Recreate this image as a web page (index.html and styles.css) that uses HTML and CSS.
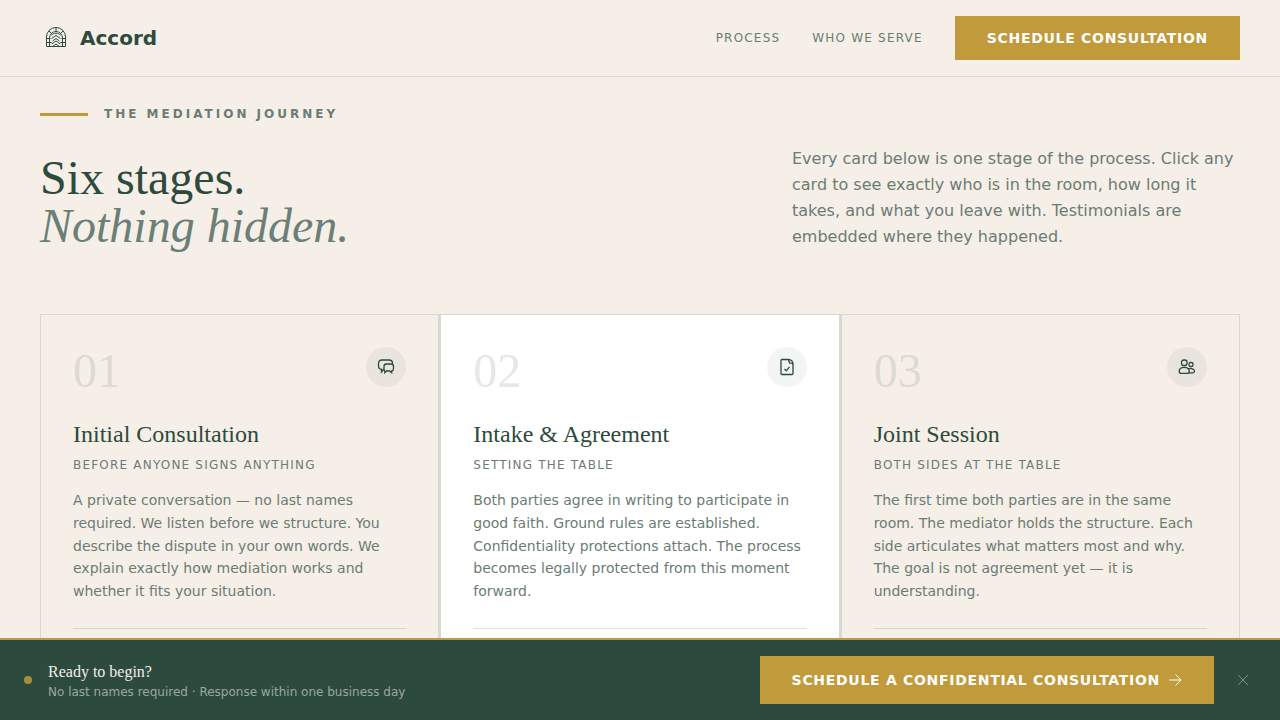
FILE: index.html
```html
<!DOCTYPE html>
<html lang="en">
<head>
    <meta charset="UTF-8">
    <meta name="viewport" content="width=device-width, initial-scale=1.0">
    <title>Accord</title>
    <link rel="stylesheet" href="styles.css">
</head>
<body>
    <header class="site-header">
        <a class="brand" href="#">
            <svg class="brand-mark" viewBox="0 0 32 32" fill="none" stroke="currentColor">
                <path d="M6.500 24.500V15a9.500 9.500 0 0 1 19 0v9.500z"/>
                <path d="M9.500 24.500V16a6.500 6.500 0 0 1 13 0v8.500M6.500 16.500h4M21.500 16.500h4M6.500 20.500h5M20.500 20.500h5M16 5.500v4M9 9l3 3M23 9l-3 3"/>
                <path d="M11.500 13.500c2-3 7-3 9 0M11.500 16.500l4.500-3 4.500 3M12.500 19l3.500-2.500 3.500 2.500M11.500 22l4.500-3 4.500 3M12.500 24.500l3.500-2.500 3.500 2.500"/>
            </svg>
            <span>Accord</span>
        </a>
        <nav class="nav">
            <a class="nav-link" href="#process">Process</a>
            <a class="nav-link" href="#serve">Who We Serve</a>
            <a class="btn" href="#schedule">Schedule Consultation</a>
        </nav>
    </header>

    <main class="journey" id="process">
        <div class="eyebrow">The Mediation Journey</div>
        <div class="intro">
            <h1>Six stages.<br><em>Nothing hidden.</em></h1>
            <p>Every card below is one stage of the process. Click any card to see exactly who is in the room, how long it takes, and what you leave with. Testimonials are embedded where they happened.</p>
        </div>

        <div class="stages">
            <article class="card">
                <div class="card-top">
                    <span class="number">01</span>
                    <span class="badge">
                        <svg viewBox="0 0 18 18" fill="none" stroke="currentColor">
                            <path d="M7 11.500H6.500L4.500 14v-2.600C2.300 11.100 1.500 10 1.500 8V5.500c0-2.400 1-3.500 3.500-3.500h7c2.500 0 3.500 1 3.500 3.500V6"/>
                            <path d="M9.500 6h4.500c1.800 0 2.500.7 2.500 2.500v2c0 1.600-.5 2.300-1.800 2.500v1.700L12.700 13H9.500l-1.700 1.700V13c-.6-.4-.8-1.200-.8-2.500v-2C7 6.700 7.700 6 9.500 6z"/>
                        </svg>
                    </span>
                </div>
                <h2>Initial Consultation</h2>
                <p class="subtitle">Before anyone signs anything</p>
                <p class="text">A private conversation — no last names required. We listen before we structure. You describe the dispute in your own words. We explain exactly how mediation works and whether it fits your situation.</p>
                <hr>
            </article>
            <article class="card card-active">
                <div class="card-top">
                    <span class="number">02</span>
                    <span class="badge">
                        <svg viewBox="0 0 18 18" fill="none" stroke="currentColor" stroke-linejoin="round">
                            <path d="M4 1.500h6.500c2.500 0 4.500 2 4.500 4.500v9.500c0 .6-.4 1-1 1H4c-.6 0-1-.4-1-1v-13c0-.6.400-1 1-1z"/>
                            <path d="M9.800 1.500c1 0 1.200.6 1.200 1.500 0 1.800.5 2.200 2 2.200 1.300 0 2 .3 2 1.300M6.500 11l1.800 1.800 3.200-4"/>
                        </svg>
                    </span>
                </div>
                <h2>Intake &amp; Agreement</h2>
                <p class="subtitle">Setting the table</p>
                <p class="text">Both parties agree in writing to participate in good faith. Ground rules are established. Confidentiality protections attach. The process becomes legally protected from this moment forward.</p>
                <hr>
            </article>
            <article class="card">
                <div class="card-top">
                    <span class="number">03</span>
                    <span class="badge">
                        <svg viewBox="0 0 18 18" fill="none" stroke="currentColor">
                            <rect x="3.500" y="2" width="5.500" height="5.500" rx="2.200"/>
                            <rect x="11" y="4.500" width="4" height="4" rx="1.600"/>
                            <path d="M1.200 13.400c0-2.600 2.200-4 5-4s5 1.400 5 4c0 1.200-.9 1.900-2.200 1.900H3.400c-1.300 0-2.200-.7-2.200-1.900zM10.300 10.900c3-1.100 6.200.1 6.200 2.400 0 1-.8 1.500-1.800 1.500H11"/>
                        </svg>
                    </span>
                </div>
                <h2>Joint Session</h2>
                <p class="subtitle">Both sides at the table</p>
                <p class="text">The first time both parties are in the same room. The mediator holds the structure. Each side articulates what matters most and why. The goal is not agreement yet — it is understanding.</p>
                <hr>
            </article>
        </div>
    </main>

    <aside class="cta-bar">
        <span class="dot"></span>
        <div class="cta-copy">
            <p class="cta-title">Ready to begin?</p>
            <p class="cta-note">No last names required · Response within one business day</p>
        </div>
        <a class="btn btn-large" href="#schedule">
            Schedule a Confidential Consultation
            <svg viewBox="0 0 14 14" fill="none" stroke="currentColor">
                <path d="M1 7h12M7.500 1.500 13 7l-5.500 5.500"/>
            </svg>
        </a>
        <button class="close" type="button" aria-label="Dismiss">
            <svg viewBox="0 0 14 14" fill="none" stroke="currentColor">
                <path d="M2 2l10 10M12 2 2 12"/>
            </svg>
        </button>
    </aside>
</body>
</html>
```
FILE: styles.css
```css
* {
    box-sizing: border-box;
}
body {
    margin: 0;
    padding-bottom: 82px;
    background: #f5efe7;
    color: #6b7c74;
    font-family: "DejaVu Sans", sans-serif;
}
h1, h2, p {
    margin: 0;
    font-weight: 400;
}
a {
    text-decoration: none;
}
svg {
    display: block;
}
.site-header {
    display: flex;
    align-items: center;
    justify-content: space-between;
    padding: 16px 40px;
    border-bottom: 1px solid #e0dad3;
}
.brand {
    display: flex;
    align-items: center;
    gap: 8px;
    color: #2d4a3e;
    font-size: 20px;
    font-weight: 700;
}
.brand-mark {
    width: 32px;
    height: 32px;
}
.nav {
    display: flex;
    align-items: center;
    gap: 32px;
}
.nav-link {
    color: #6b7c74;
    font-size: 12px;
    letter-spacing: 0.1em;
    text-transform: uppercase;
}
.btn {
    display: flex;
    align-items: center;
    gap: 8px;
    height: 44px;
    padding: 0 32px;
    background: #c19a3b;
    color: #fff;
    font-size: 14px;
    font-weight: 700;
    letter-spacing: 0.05em;
    text-transform: uppercase;
    white-space: nowrap;
}
.btn svg {
    width: 14px;
    height: 14px;
}
.btn-large {
    height: 48px;
}
.journey {
    padding: 28px 40px;
}
.eyebrow {
    display: flex;
    align-items: center;
    gap: 16px;
    font-size: 12px;
    line-height: 18px;
    font-weight: 700;
    letter-spacing: 3px;
    text-transform: uppercase;
}
.eyebrow::before {
    content: "";
    width: 48px;
    height: 3px;
    background: #c19a3b;
}
.intro {
    display: grid;
    grid-template-columns: 1fr 448px;
    align-items: end;
    margin: 23px 0 64px;
}
h1 {
    color: #2d4a3e;
    font-family: "Liberation Serif", serif;
    font-size: 48px;
    line-height: 48px;
}
h1 em {
    color: #6b7f78;
}
.intro p {
    font-size: 16px;
    line-height: 26px;
}
.stages {
    display: grid;
    grid-template-columns: repeat(3, 1fr);
    gap: 3px;
    background: #d8d9d3;
    border: 1px solid #dcd8d1;
}
.card {
    padding: 32px;
    background: #f5efe7;
}
.card-active {
    background: #fff;
}
.card-top {
    display: flex;
    align-items: flex-start;
    justify-content: space-between;
    margin-bottom: 24px;
}
.number {
    color: rgba(45, 74, 62, 0.15);
    font-family: "Liberation Serif", serif;
    font-size: 48px;
    line-height: 48px;
}
.badge {
    display: flex;
    align-items: center;
    justify-content: center;
    width: 40px;
    height: 40px;
    border-radius: 50%;
    background: rgba(45, 74, 62, 0.06);
    color: #2d4a3e;
}
.badge svg {
    width: 18px;
    height: 18px;
    stroke-width: 1.3;
}
h2 {
    margin-bottom: 8px;
    color: #2d4a3e;
    font-family: "Liberation Serif", serif;
    font-size: 24px;
    line-height: 30px;
}
.subtitle {
    margin-bottom: 16px;
    font-size: 12px;
    line-height: 16px;
    letter-spacing: 0.1em;
    text-transform: uppercase;
}
.text {
    margin-bottom: 25px;
    font-size: 14px;
    line-height: 1.625;
}
hr {
    margin: 0;
    border: 0;
    border-top: 1px solid rgba(45, 74, 62, 0.15);
}
.cta-bar {
    position: fixed;
    right: 0;
    bottom: 0;
    left: 0;
    display: flex;
    align-items: center;
    gap: 16px;
    padding: 16px 24px;
    border-top: 2px solid #c19a3b;
    background: #2d4a3e;
}
.dot {
    width: 8px;
    height: 8px;
    border-radius: 50%;
    background: #a88c3c;
}
.cta-copy {
    flex: 1;
}
.cta-title {
    color: #f5efe7;
    font-family: "Liberation Serif", serif;
    font-size: 16px;
    line-height: 24px;
}
.cta-note {
    color: #99a89f;
    font-size: 12px;
    line-height: 16px;
}
.close {
    display: flex;
    padding: 6px;
    border: 0;
    background: none;
    color: #7d9187;
    cursor: pointer;
}
.close svg {
    width: 14px;
    height: 14px;
}
```
